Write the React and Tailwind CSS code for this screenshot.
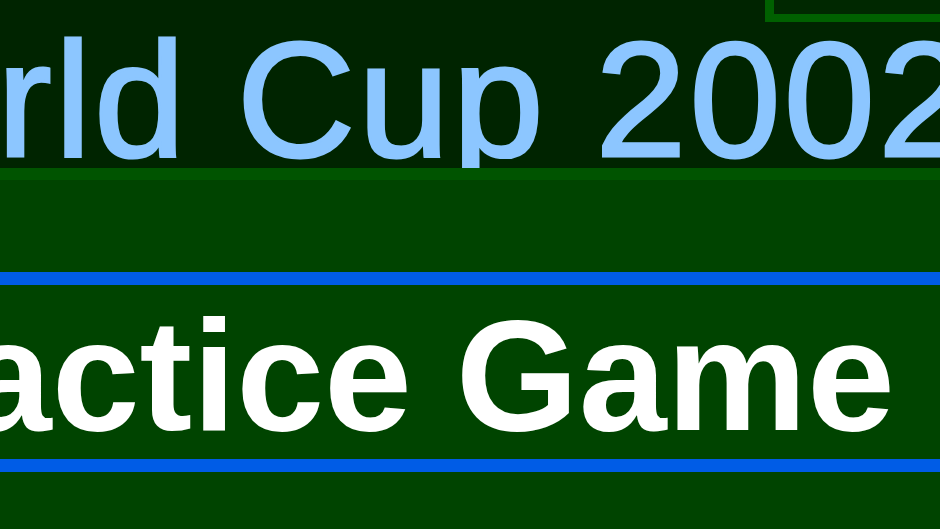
import React from "react";

const headingFont = { fontFamily: '"Liberation Sans", Arial, sans-serif' };

export default function App() {
  return (
    <div className="h-[529px] w-[940px] overflow-hidden bg-[#004400]" style={headingFont}>
      <header className="relative h-[168px] overflow-hidden bg-[#002400]">
        <div className="absolute right-0 top-0 h-[22px] w-[175px] border-b-[8px] border-l-[9px] border-[#006000] bg-[#002800]" />
        <h1 className="ml-[-252px] whitespace-nowrap pt-[18px] text-[164px] font-normal leading-none tracking-[3px] text-[#8cc6ff] [-webkit-text-stroke:3px_#8cc6ff]">
          World Cup 2002
        </h1>
      </header>
      <div className="h-[12px] bg-[#005400]" />
      <div className="h-[92px]" />
      <div className="h-[13px] bg-[#005ce6]" />
      <div className="h-[174px] overflow-hidden pt-[11px]">
        <h2 className="ml-[-203px] whitespace-nowrap text-[158px] font-bold leading-none text-white">
          Practice Game
        </h2>
      </div>
      <div className="h-[13px] bg-[#005ce6]" />
    </div>
  );
}
